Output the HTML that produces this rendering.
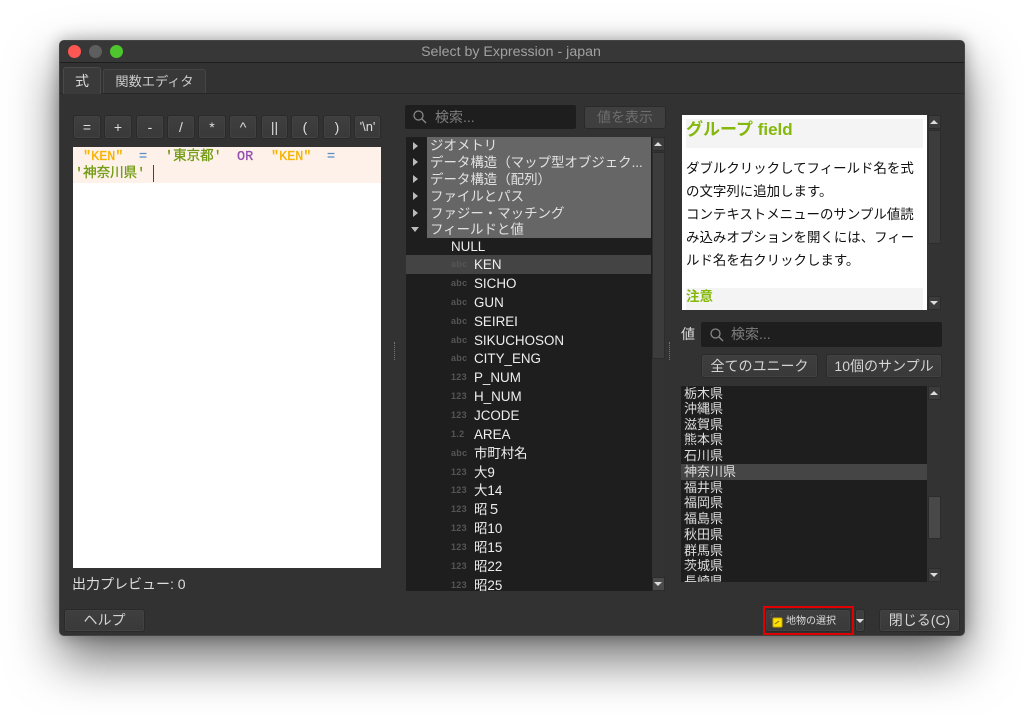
<!DOCTYPE html>
<html><head><meta charset="utf-8"><style>
html,body{margin:0;padding:0;width:1024px;height:714px;overflow:hidden;background:#fff}
*{box-sizing:border-box}
body{font-family:"Liberation Sans","Noto Sans CJK JP",sans-serif;position:relative;filter:blur(.35px)}
div,span.a{position:absolute;white-space:nowrap}
.win{left:59px;top:40px;width:906px;height:596px;background:#323232;border-radius:5px;box-shadow:0 24px 50px rgba(0,0,0,.55),0 0 16px rgba(0,0,0,.3);border:1px solid #444}
.btn{background:linear-gradient(#3f3f3f,#393939);border:1px solid #2a2a2a;border-radius:3px;color:#d4d4d4;text-align:center;font-size:14px;box-shadow:inset 0 0 0 1px #424242}
.op{top:115px;height:24px;line-height:22px;font-size:14px;font-family:"Liberation Sans",sans-serif;color:#ddd}
.t{font-size:13.45px;line-height:17px;color:#e2e2e2;left:430px}
.g{left:427px;width:224px;height:17px;background:#666}
.arrow{left:413px;width:0;height:0;border-left:5px solid #bbb;border-top:4px solid transparent;border-bottom:4px solid transparent}
.f{left:474px;font-size:13.4px;line-height:19px;color:#eee}
.k{left:451px;font-size:9px;line-height:19px;color:#555;font-weight:bold;letter-spacing:.3px}
.v{left:684px;font-size:13px;line-height:16px;color:#ddd}
.h{left:686px;font-size:13.45px;line-height:23px;color:#111}
.mono{font-family:"Liberation Mono","Noto Sans CJK JP",monospace;font-size:13.5px;line-height:18px;-webkit-text-stroke:.3px currentColor}
.sb{background:#3c3c3c;border:1px solid #2c2c2c}
.up,.dn{width:0;height:0;border-left:4px solid transparent;border-right:4px solid transparent}
.up{border-bottom:4px solid #ddd}.dn{border-top:4px solid #ddd}
</style></head><body>
<div class="win"></div>
<!-- titlebar -->
<div style="left:60px;top:41px;width:904px;height:22px;background:#373737;border-bottom:1px solid #1e1e1e;border-radius:5px 5px 0 0"></div>
<div style="left:68px;top:45px;width:13px;height:13px;border-radius:50%;background:#fc5753"></div>
<div style="left:89px;top:45px;width:13px;height:13px;border-radius:50%;background:#5e5e5e"></div>
<div style="left:110px;top:45px;width:13px;height:13px;border-radius:50%;background:#4fc52d"></div>
<div style="left:299px;width:424px;text-align:center;top:44px;font-size:14.2px;line-height:16px;color:#a0a0a0">Select by Expression - japan</div>
<!-- tabs -->
<div style="left:60px;top:93px;width:904px;height:1px;background:#272727"></div>
<div style="left:63px;top:67px;width:38px;height:27px;background:#3a3a3a;border:1px solid #4a4a4a;border-bottom:0;border-radius:3px 3px 0 0;color:#ddd;font-size:14px;text-align:center;line-height:27px">式</div>
<div style="left:103px;top:69px;width:103px;height:24px;background:#383838;border:1px solid #454545;border-bottom:0;border-radius:3px 3px 0 0;color:#ccc;font-size:13.2px;text-align:center;line-height:24px">関数エディタ</div>
<!-- op buttons -->
<div class="btn op" style="left:73px;width:28px">=</div>
<div class="btn op" style="left:104px;width:28px">+</div>
<div class="btn op" style="left:136px;width:28px">-</div>
<div class="btn op" style="left:167px;width:28px">/</div>
<div class="btn op" style="left:198px;width:28px">*</div>
<div class="btn op" style="left:229px;width:28px">^</div>
<div class="btn op" style="left:261px;width:27px">||</div>
<div class="btn op" style="left:291px;width:28px">(</div>
<div class="btn op" style="left:323px;width:28px">)</div>
<div class="btn op" style="left:354px;width:27px;font-size:13px">'\n'</div>
<!-- editor -->
<div style="left:73px;top:147px;width:308px;height:421px;background:#fff"></div>
<div style="left:73px;top:147px;width:308px;height:36px;background:#fdf1ea"></div>
<div class="mono" style="left:83px;top:149px;color:#f5b400">"KEN"</div>
<div class="mono" style="left:139px;top:149px;color:#5b8fc4">=</div>
<div class="mono" style="left:165px;top:149px;color:#6f9a0e">'東京都'</div>
<div class="mono" style="left:237px;top:149px;color:#9350b0">OR</div>
<div class="mono" style="left:271px;top:149px;color:#f5b400">"KEN"</div>
<div class="mono" style="left:327px;top:149px;color:#5b8fc4">=</div>
<div class="mono" style="left:75px;top:166px;color:#6f9a0e">'神奈川県'</div>
<div style="left:153px;top:165px;width:1px;height:17px;background:#444"></div>
<div style="left:72px;top:576px;font-size:14px;line-height:17px;color:#ddd">出力プレビュー: 0</div>
<!-- middle -->
<div style="left:405px;top:105px;width:171px;height:24px;background:#1e1e1e;border-radius:2px"></div>
<svg style="position:absolute;left:412px;top:109px" width="16" height="16" fill="none" stroke="#888" stroke-width="1.3"><circle cx="6.5" cy="6.5" r="4.5"/><path d="M10 10l4 4"/></svg>
<div style="left:435px;top:109px;font-size:14px;line-height:17px;color:#7e7e7e">検索...</div>
<div class="btn" style="left:584px;top:106px;width:82px;height:23px;line-height:21px;color:#6e6e6e;box-shadow:none;border-color:#2a2a2a;background:#3f3f3f">値を表示</div>
<div style="left:406px;top:137px;width:246px;height:454px;background:#1e1e1e"></div>
<div class="g" style="top:137px;height:101px"></div>
<div class="t" style="top:137px">ジオメトリ</div>
<div class="t" style="top:154px">データ構造（マップ型オブジェク...</div>
<div class="t" style="top:171px">データ構造（配列）</div>
<div class="t" style="top:188px">ファイルとパス</div>
<div class="t" style="top:205px">ファジー・マッチング</div>
<div class="t" style="top:221px">フィールドと値</div>
<div class="arrow" style="top:142px"></div><div class="arrow" style="top:158px"></div><div class="arrow" style="top:175px"></div><div class="arrow" style="top:192px"></div><div class="arrow" style="top:209px"></div>
<div style="left:411px;top:227px;width:0;height:0;border-top:5px solid #bbb;border-left:4px solid transparent;border-right:4px solid transparent"></div>
<div class="f" style="left:451px;top:237px">NULL</div>
<div style="left:406px;top:255px;width:245px;height:19px;background:#444"></div>
<div class="k" style="top:255px">abc</div><div class="f" style="top:255px">KEN</div>
<div class="k" style="top:274px">abc</div><div class="f" style="top:274px">SICHO</div>
<div class="k" style="top:293px">abc</div><div class="f" style="top:293px">GUN</div>
<div class="k" style="top:312px">abc</div><div class="f" style="top:312px">SEIREI</div>
<div class="k" style="top:331px">abc</div><div class="f" style="top:331px">SIKUCHOSON</div>
<div class="k" style="top:349px">abc</div><div class="f" style="top:349px">CITY_ENG</div>
<div class="k" style="top:368px">123</div><div class="f" style="top:368px">P_NUM</div>
<div class="k" style="top:387px">123</div><div class="f" style="top:387px">H_NUM</div>
<div class="k" style="top:406px">123</div><div class="f" style="top:406px">JCODE</div>
<div class="k" style="top:425px">1.2</div><div class="f" style="top:425px">AREA</div>
<div class="k" style="top:444px">abc</div><div class="f" style="top:444px">市町村名</div>
<div class="k" style="top:463px">123</div><div class="f" style="top:463px">大9</div>
<div class="k" style="top:481px">123</div><div class="f" style="top:481px">大14</div>
<div class="k" style="top:500px">123</div><div class="f" style="top:500px">昭５</div>
<div class="k" style="top:519px">123</div><div class="f" style="top:519px">昭10</div>
<div class="k" style="top:538px">123</div><div class="f" style="top:538px">昭15</div>
<div class="k" style="top:557px">123</div><div class="f" style="top:557px">昭22</div>
<div style="left:406px;top:576px;width:245px;height:15px;overflow:hidden"><div class="k" style="left:45px;top:0">123</div><div class="f" style="left:68px;top:0">昭25</div></div>
<!-- middle scrollbar -->
<div style="left:652px;top:137px;width:13px;height:454px;background:#333"></div>
<div class="sb" style="left:652px;top:137px;width:13px;height:14px"></div><div class="up" style="left:654px;top:142px"></div>
<div class="sb" style="left:652px;top:152px;width:13px;height:207px"></div>
<div class="sb" style="left:652px;top:577px;width:13px;height:14px;background:#4a4a4a"></div><div class="dn" style="left:654px;top:582px"></div>
<!-- splitters -->
<div style="left:394px;top:342px;width:1px;height:18px;border-left:1px dotted #777"></div>
<div style="left:669px;top:342px;width:1px;height:18px;border-left:1px dotted #777"></div>
<!-- help -->
<div style="left:682px;top:115px;width:245px;height:195px;background:#fff"></div>
<div style="left:686px;top:119px;width:237px;height:29px;background:#f4f4f4"></div>
<div style="left:686px;top:119px;font-size:17px;line-height:21px;font-weight:bold;color:#84b80a">グループ field</div>
<div class="h" style="top:157px">ダブルクリックしてフィールド名を式</div>
<div class="h" style="top:180px">の文字列に追加します。</div>
<div class="h" style="top:203px">コンテキストメニューのサンプル値読</div>
<div class="h" style="top:226px">み込みオプションを開くには、フィー</div>
<div class="h" style="top:249px">ルド名を右クリックします。</div>
<div style="left:686px;top:288px;width:237px;height:22px;background:#f4f4f4"></div>
<div style="left:686px;top:288px;font-size:13.5px;line-height:18px;font-weight:bold;color:#84b80a">注意</div>
<div class="sb" style="left:928px;top:115px;width:13px;height:14px"></div><div class="up" style="left:930px;top:120px"></div>
<div style="left:928px;top:129px;width:13px;height:167px;background:#333"></div>
<div class="sb" style="left:928px;top:130px;width:13px;height:114px"></div>
<div class="sb" style="left:928px;top:296px;width:13px;height:14px"></div><div class="dn" style="left:930px;top:301px"></div>
<!-- values -->
<div style="left:681px;top:326px;font-size:14px;line-height:17px;color:#ddd">値</div>
<div style="left:701px;top:322px;width:241px;height:25px;background:#1e1e1e;border-radius:2px"></div>
<svg style="position:absolute;left:709px;top:327px" width="16" height="16" fill="none" stroke="#888" stroke-width="1.3"><circle cx="6.5" cy="6.5" r="4.5"/><path d="M10 10l4 4"/></svg>
<div style="left:731px;top:326px;font-size:14px;line-height:17px;color:#7e7e7e">検索...</div>
<div class="btn" style="left:701px;top:354px;width:117px;height:24px;line-height:22px;font-size:14px">全てのユニーク</div>
<div class="btn" style="left:826px;top:354px;width:116px;height:24px;line-height:22px;font-size:14px">10個のサンプル</div>
<div style="left:681px;top:386px;width:246px;height:196px;background:#1e1e1e;overflow:hidden"></div>
<div style="left:681px;top:464px;width:246px;height:16px;background:#454545"></div>
<div style="left:681px;top:386px;width:246px;height:196px;overflow:hidden">
<div class="v" style="left:3px;top:0">栃木県</div>
<div class="v" style="left:3px;top:15px">沖縄県</div>
<div class="v" style="left:3px;top:31px">滋賀県</div>
<div class="v" style="left:3px;top:46px">熊本県</div>
<div class="v" style="left:3px;top:62px">石川県</div>
<div class="v" style="left:3px;top:78px">神奈川県</div>
<div class="v" style="left:3px;top:94px">福井県</div>
<div class="v" style="left:3px;top:109px">福岡県</div>
<div class="v" style="left:3px;top:125px">福島県</div>
<div class="v" style="left:3px;top:141px">秋田県</div>
<div class="v" style="left:3px;top:157px">群馬県</div>
<div class="v" style="left:3px;top:172px">茨城県</div>
<div class="v" style="left:3px;top:188px">長崎県</div>
</div>
<div style="left:928px;top:386px;width:13px;height:196px;background:#333"></div>
<div class="sb" style="left:928px;top:386px;width:13px;height:14px"></div><div class="up" style="left:930px;top:391px"></div>
<div class="sb" style="left:928px;top:496px;width:13px;height:43px;background:#484848"></div>
<div class="sb" style="left:928px;top:568px;width:13px;height:14px"></div><div class="dn" style="left:930px;top:573px"></div>
<!-- bottom -->
<div class="btn" style="left:64px;top:609px;width:81px;height:23px;line-height:21px;font-size:14px">ヘルプ</div>
<div class="btn" style="left:765px;top:609px;width:86px;height:23px"></div>
<div style="left:763px;top:606px;width:91px;height:29px;border:2px solid #e00000"></div>
<svg style="position:absolute;left:769px;top:612px" width="16" height="16" fill="none"><path d="M2 6V2h4" stroke="#7a4a9a" stroke-dasharray="1 1"/><rect x="4" y="6" width="9" height="9" rx="1" fill="#ffe000" stroke="#c9a800"/><path d="M6 12l4-3" stroke="#7a6a20"/></svg>
<div style="left:786px;top:615px;font-size:10px;line-height:13px;color:#ddd">地物の選択</div>
<div class="btn" style="left:855px;top:609px;width:10px;height:23px"></div><div class="dn" style="left:856px;top:619px"></div>
<div class="btn" style="left:879px;top:609px;width:81px;height:23px;line-height:21px;font-size:14px">閉じる(C)</div>
</body></html>
